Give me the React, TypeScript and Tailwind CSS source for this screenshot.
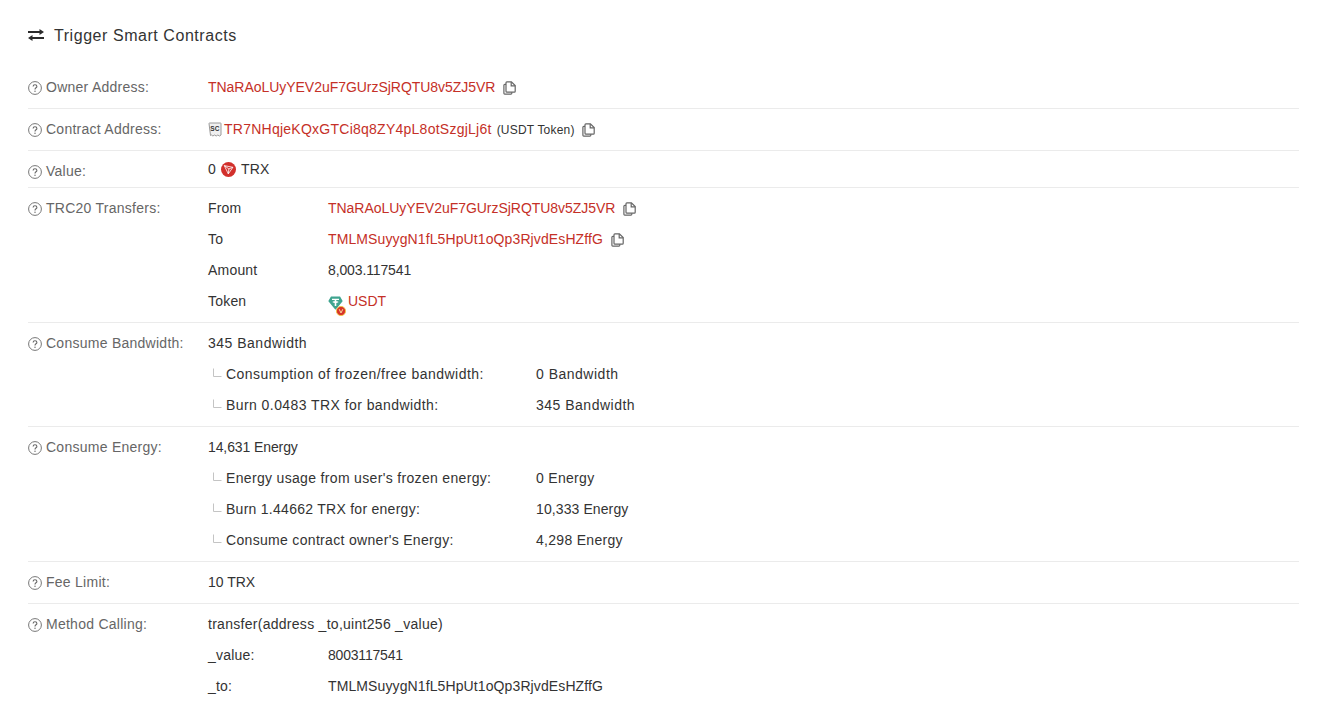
import React from "react";

const Copy = () => (
  <svg width="13" height="14" viewBox="0 0 13 14" fill="none" stroke="#666" strokeWidth="1.2" className="shrink-0">
    <path d="M3 3.400H1.800c-.5 0-.9.400-.9.900v8c0 .4.400.8.800.8h6.200c.5 0 .9-.4.900-.8v-1.100" />
    <path d="M3 1.700c0-.5.400-.9.900-.9H8.400l3.800 3.800v5.700c0 .5-.4.900-.9.900H3.900c-.5 0-.9-.4-.9-.9z" />
    <path d="M8.200 1v3.800h3.900" />
  </svg>
);

const Help = () => (
  <svg width="14" height="14" viewBox="0 0 14 14" fill="none" className="shrink-0">
    <circle cx="7" cy="7" r="6.400" stroke="#777" strokeWidth="1" />
    <path d="M5.100 5.500c0-1.100.8-1.800 1.900-1.800s1.900.7 1.900 1.700c0 1.400-1.900 1.400-1.900 3" stroke="#666" strokeWidth="1.100" />
    <circle cx="7" cy="10.300" r=".7" fill="#666" />
  </svg>
);

const Tron = () => (
  <svg width="15" height="15" viewBox="0 0 15 15" className="shrink-0">
    <circle cx="7.500" cy="7.500" r="7.500" fill="#d2302c" />
    <path d="M3.300 3.600l8.600 1.700-4.600 6.600z M3.300 3.600l4.600 3.300 4-1.600M7.900 6.900l-.6 5" fill="none" stroke="#fff" strokeWidth=".8" />
  </svg>
);

const Tether = () => (
  <span className="relative inline-flex w-[18px] h-[18px] shrink-0">
    <svg width="15" height="14" viewBox="0 0 15 14" className="absolute left-0 top-[3px]">
      <path d="M3.400 0.500h8.200c.3 0 .5.100.6.300l2.300 4c.2.300.1.600-.1.800L8 13.200c-.3.300-.7.300-1 0L.6 5.600c-.2-.2-.3-.5-.1-.8l2.300-4c.1-.2.300-.3.600-.3z" fill="#3fa48f" />
      <path d="M4 2.800h7v1.300H8.300v1.200c1.200.1 2.200.4 2.200.8s-1 .7-2.200.8v3H6.700v-3c-1.200-.1-2.200-.4-2.200-.8s1-.7 2.200-.8V4.100H4z" fill="#fff" />
    </svg>
    <svg width="10" height="10" viewBox="0 0 10 10" className="absolute left-[8px] top-[13px]">
      <circle cx="5" cy="5" r="4.600" fill="#d8342a" stroke="#f3c544" strokeWidth=".9" />
      <path d="M3.200 3.200L5 7l1.800-3.800" fill="none" stroke="#f7d9a0" strokeWidth="1" />
    </svg>
  </span>
);

const Contract = () => (
  <svg width="14" height="15" viewBox="0 0 14 15" fill="none" className="shrink-0">
    <path d="M1 1.500c0-.3.2-.5.5-.5h11c.3 0 .5.200.5.500V13l-1.500 1-1.700-1-1.600 1-1.700-1-1.600 1-1.400-1-1 .500z" fill="#f0f0f0" stroke="#9a9a9a" strokeWidth="1" />
    <text x="7" y="9" textAnchor="middle" fontSize="6.500" fontWeight="700" fill="#333" fontFamily="Liberation Sans">SC</text>
  </svg>
);

const Corner = () => (
  <svg width="10" height="10" viewBox="0 0 10 10" fill="none" stroke="#c4c4c4" strokeWidth="1" className="shrink-0 ml-[4px] mr-[4px] mb-[3px]">
    <path d="M1.500 0.500v8H9.500" />
  </svg>
);

const Red = ({ children, className = "" }: { children: React.ReactNode; className?: string }) => (
  <span className={`text-[#c53027] ${className}`}>{children}</span>
);

function Row({ label, children, short }: { label: string; children: React.ReactNode; short?: boolean }) {
  return (
    <div className={`flex border-b border-[#ebebeb] last:border-b-0 ${short ? "pt-[3px] pb-[2px]" : "py-[5px]"}`}>
      <div className={`w-[180px] shrink-0 h-[31px] flex items-center gap-[4px] text-[#666] tracking-[0.26px] ${short ? "pt-[4px]" : ""}`}>
        <Help />
        <span>{label}</span>
      </div>
      <div className="flex-1 min-w-0">{children}</div>
    </div>
  );
}

const Line = ({ children }: { children: React.ReactNode }) => (
  <div className="h-[31px] flex items-center">{children}</div>
);

const Pair = ({ k, children }: { k: string; children: React.ReactNode }) => (
  <Line>
    <div className="w-[120px] shrink-0">{k}</div>
    <div className="flex items-center">{children}</div>
  </Line>
);

const Sub = ({ k, v, kc, vc }: { k: string; v: string; kc: string; vc: string }) => (
  <Line>
    <div className="w-[328px] shrink-0 flex items-center">
      <Corner />
      <span className={kc}>{k}</span>
    </div>
    <div className={vc}>{v}</div>
  </Line>
);

const OWNER = "TNaRAoLUyYEV2uF7GUrzSjRQTU8v5ZJ5VR";
const TO = "TMLMSuyygN1fL5HpUt1oQp3RjvdEsHZffG";

export default function App() {
  return (
    <div className="min-h-[703px] bg-white pl-[28px] pr-[31px] pt-[25px] text-[14px] tracking-[0.2px] text-[#333] font-['Liberation_Sans','Noto_Sans',sans-serif]">
      <div className="flex items-center gap-[10px] h-[22px] text-[16px] tracking-[0.55px] text-[#333]">
        <svg width="16" height="12" viewBox="0 0 16 12" fill="#2b2b2b" className="shrink-0 mb-[2px]">
          <path d="M0 2.100H11.500V0L16 3 11.500 6V3.900H0z" />
          <path d="M16 8.100H4.500V6L0 9l4.500 3V9.900H16z" />
        </svg>
        <span>Trigger Smart Contracts</span>
      </div>
      <div className="mt-[20px]">
        <Row label="Owner Address:">
          <Line>
            <Red className="tracking-[-0.035px]">{OWNER}</Red>
            <span className="ml-[8px]"><Copy /></span>
          </Line>
        </Row>
        <Row label="Contract Address:">
          <Line>
            <Contract />
            <span className="ml-[2px]"><Red className="tracking-[0.25px]">TR7NHqjeKQxGTCi8q8ZY4pL8otSzgjLj6t</Red></span>
            <span className="ml-[5px] text-[12px]">(USDT Token)</span>
            <span className="ml-[7px]"><Copy /></span>
          </Line>
        </Row>
        <Row label="Value:" short>
          <Line>
            <span>0</span>
            <span className="ml-[5px] mr-[5px]"><Tron /></span>
            <span>TRX</span>
          </Line>
        </Row>
        <Row label="TRC20 Transfers:">
          <Pair k="From">
            <Red className="tracking-[-0.035px]">{OWNER}</Red>
            <span className="ml-[8px]"><Copy /></span>
          </Pair>
          <Pair k="To">
            <Red className="tracking-[0.11px]">{TO}</Red>
            <span className="ml-[8px]"><Copy /></span>
          </Pair>
          <Pair k="Amount"><span className="tracking-[-0.13px]">8,003.117541</span></Pair>
          <Pair k="Token">
            <Tether />
            <span className="ml-[2px]"><Red className="tracking-[0px]">USDT</Red></span>
          </Pair>
        </Row>
        <Row label="Consume Bandwidth:">
          <Line><span className="tracking-[0.5px]">345 Bandwidth</span></Line>
          <Sub k="Consumption of frozen/free bandwidth:" kc="tracking-[0.47px]" v="0 Bandwidth" vc="tracking-[0.5px]" />
          <Sub k="Burn 0.0483 TRX for bandwidth:" kc="tracking-[0.43px]" v="345 Bandwidth" vc="tracking-[0.5px]" />
        </Row>
        <Row label="Consume Energy:">
          <Line><span className="tracking-[-0.1px]">14,631 Energy</span></Line>
          <Sub k="Energy usage from user's frozen energy:" kc="tracking-[0.33px]" v="0 Energy" vc="tracking-[0.3px]" />
          <Sub k="Burn 1.44662 TRX for energy:" kc="tracking-[0.27px]" v="10,333 Energy" vc="tracking-[0.1px]" />
          <Sub k="Consume contract owner's Energy:" kc="tracking-[0.32px]" v="4,298 Energy" vc="tracking-[0.3px]" />
        </Row>
        <Row label="Fee Limit:">
          <Line><span className="tracking-[0px]">10 TRX</span></Line>
        </Row>
        <Row label="Method Calling:">
          <Line><span className="tracking-[0.28px]">transfer(address _to,uint256 _value)</span></Line>
          <Pair k="_value:"><span className="tracking-[-0.2px]">8003117541</span></Pair>
          <Pair k="_to:"><span className="tracking-[0.11px]">{TO}</span></Pair>
        </Row>
      </div>
    </div>
  );
}
